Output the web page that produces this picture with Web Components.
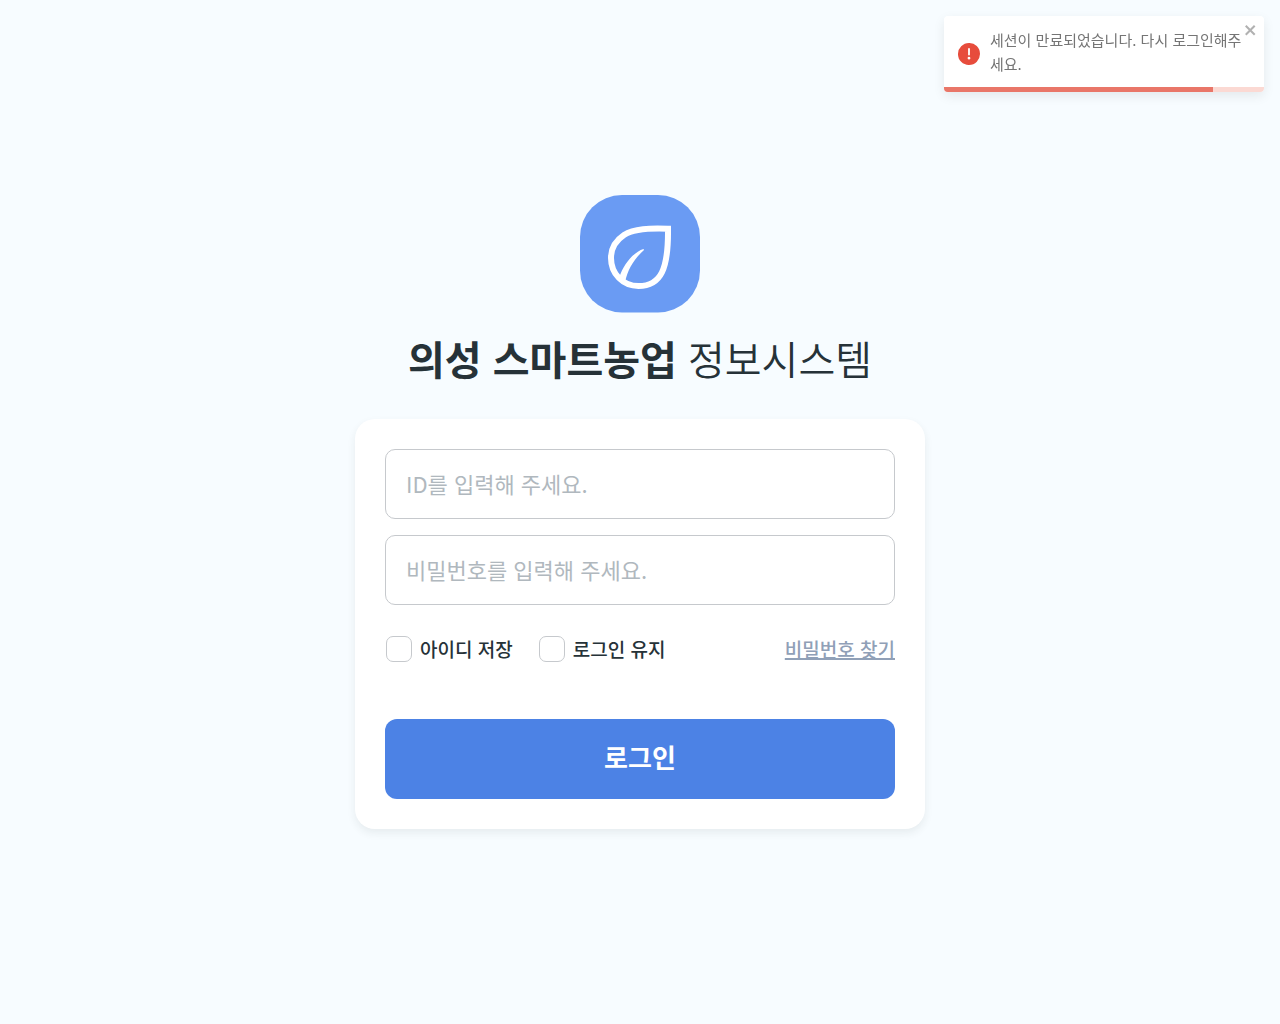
<!DOCTYPE html>
<html lang="ko">
<head>
<meta charset="utf-8">
<meta name="viewport" content="width=device-width, initial-scale=1">
<title>의성 스마트농업 정보시스템</title>
<style>
  body {
    margin: 0;
    background: #f7fcff;
    color: #263238;
    font-family: "Noto Sans CJK KR", sans-serif;
  }
</style>
</head>
<body>
<login-page>
  <toast-message slot="toast" value="84">세션이 만료되었습니다. 다시 로그인해주세요.</toast-message>
  <brand-logo></brand-logo>
  <page-title><strong>의성 스마트농업</strong> 정보시스템</page-title>
  <login-form></login-form>
</login-page>

<template id="login-page">
  <style>
    :host {
      display: block;
    }
    main {
      display: flex;
      flex-direction: column;
      align-items: center;
      justify-content: center;
      min-height: 100vh;
    }
    .toasts {
      position: fixed;
      top: 16px;
      right: 16px;
      width: 320px;
    }
  </style>
  <main><slot></slot></main>
  <div class="toasts"><slot name="toast"></slot></div>
</template>

<template id="brand-logo">
  <style>
    :host {
      display: block;
    }
    svg {
      display: block;
    }
  </style>
  <svg width="120" height="118" viewBox="0 0 120 118" fill="none" aria-hidden="true">
    <rect width="120" height="117.500" rx="42" fill="#6a9bf3"/>
    <path d="M88 33.700C70 33 54 33.500 44 40C35 46 31 54 31 63C31 79 43 91 58.500 91C81 91 88.500 74 88 33.700Z" stroke="#fff" stroke-width="6"/>
    <path d="M63.500 54C54 57 44 68 39 83L45 87C48 74 54 64 64 55Z" fill="#fff"/>
  </svg>
</template>

<template id="page-title">
  <style>
    :host {
      display: block;
      margin: 15px 0 31px;
    }
    h1 {
      margin: 0;
      font-size: 40px;
      font-weight: 350;
      line-height: 60px;
    }
    ::slotted(strong) {
      font-weight: 700;
    }
  </style>
  <h1><slot></slot></h1>
</template>

<template id="login-form">
  <style>
    :host {
      display: block;
      box-sizing: border-box;
      width: 100%;
      max-width: 570px;
      padding: 30px;
      border-radius: 20px;
      background: #fff;
      box-shadow: 0 4px 8px rgba(38, 50, 56, 0.08);
    }
    form {
      display: flex;
      flex-direction: column;
      gap: 16px;
    }
    .options {
      display: flex;
      align-items: center;
      gap: 25px;
      margin: 14px 0 40px;
    }
    a {
      margin-left: auto;
      color: #90a0b7;
      font-size: 19px;
      font-weight: 500;
      line-height: 28px;
      text-decoration-thickness: 2px;
      text-underline-offset: 1px;
    }
    button {
      height: 80px;
      padding: 0 0 5px;
      border: 0;
      border-radius: 12px;
      background: #4c82e5;
      color: #fff;
      font: inherit;
      font-size: 26px;
      font-weight: 700;
    }
  </style>
  <form>
    <text-field placeholder="ID를 입력해 주세요."></text-field>
    <text-field type="password" placeholder="비밀번호를 입력해 주세요."></text-field>
    <div class="options">
      <check-box>아이디 저장</check-box>
      <check-box>로그인 유지</check-box>
      <a href="#">비밀번호 찾기</a>
    </div>
    <button type="button">로그인</button>
  </form>
</template>

<template id="text-field">
  <style>
    :host {
      display: block;
    }
    input {
      display: block;
      box-sizing: border-box;
      width: 100%;
      height: 70px;
      padding: 0 20px 2px;
      border: 1px solid #c6c9cd;
      border-radius: 10px;
      background: #fff;
      color: inherit;
      font: inherit;
      font-size: 22px;
    }
    input::placeholder {
      color: #b0b8be;
      opacity: 1;
    }
  </style>
  <input>
</template>

<template id="check-box">
  <style>
    :host {
      display: block;
    }
    label {
      display: flex;
      align-items: center;
      gap: 8px;
      font-size: 19px;
      font-weight: 500;
      line-height: 28px;
    }
    input {
      appearance: none;
      width: 26px;
      height: 26px;
      margin: 1px 0 1px 1px;
      border: 1px solid #c6c9cd;
      border-radius: 7px;
      background: #fff;
    }
    input:checked {
      border-color: #4c82e5;
      background: #4c82e5;
    }
  </style>
  <label><input type="checkbox"><span><slot></slot></span></label>
</template>

<template id="toast-message">
  <style>
    :host {
      display: block;
      border-radius: 4px;
      overflow: hidden;
      background: #fff;
      box-shadow: 0 4px 12px rgba(0, 0, 0, 0.08);
      color: #757575;
    }
    .body {
      display: flex;
      align-items: center;
      gap: 10px;
      padding: 14px 14px 9px;
    }
    .icon {
      flex: none;
    }
    .text {
      flex: 1;
      font-size: 15px;
      line-height: 24px;
      margin: -2px 0 2px;
    }
    button {
      position: absolute;
      top: 6px;
      right: 6px;
      padding: 0;
      border: 0;
      background: none;
      color: #000;
      opacity: 0.3;
    }
    button svg {
      display: block;
    }
    .track {
      height: 5px;
      background: #fbd9d3;
    }
    .bar {
      height: 100%;
      background: #e97668;
    }
  </style>
  <div role="alert">
    <div class="body">
      <svg class="icon" width="22" height="22" viewBox="0 0 24 24" fill="#e74c3c" aria-hidden="true">
        <path d="M11.983 0a12.206 12.206 0 00-8.51 3.653A11.8 11.8 0 000 12.207 11.779 11.779 0 0011.800 24h.214A12.111 12.111 0 0024 11.791 11.766 11.766 0 0011.983 0zM10.500 16.542a1.476 1.476 0 011.449-1.530h.027a1.527 1.527 0 011.523 1.470 1.475 1.475 0 01-1.449 1.530h-.027a1.529 1.529 0 01-1.523-1.470zM11 12.500v-6a1 1 0 012 0v6a1 1 0 11-2 0z"/>
      </svg>
      <div class="text"><slot></slot></div>
    </div>
    <div class="track"><div class="bar"></div></div>
  </div>
  <button type="button" aria-label="닫기">
    <svg width="14" height="16" viewBox="0 0 14 16" fill="currentColor" aria-hidden="true">
      <path fill-rule="evenodd" d="M7.710 8.230l3.750 3.750-1.480 1.480-3.750-3.750-3.750 3.750L1 11.980l3.750-3.750L1 4.480 2.480 3l3.750 3.750L9.980 3l1.480 1.480-3.750 3.750z"/>
    </svg>
  </button>
</template>

<script>
class BaseElement extends HTMLElement {
  constructor() {
    super();
    const template = document.getElementById(this.localName);
    this.attachShadow({mode: 'open'}).append(template.content.cloneNode(true));
  }
}

customElements.define('login-page', class extends BaseElement {});
customElements.define('brand-logo', class extends BaseElement {});
customElements.define('page-title', class extends BaseElement {});
customElements.define('check-box', class extends BaseElement {});

customElements.define('text-field', class extends BaseElement {
  connectedCallback() {
    const input = this.shadowRoot.querySelector('input');
    input.type = this.getAttribute('type') || 'text';
    input.placeholder = this.getAttribute('placeholder');
    input.setAttribute('aria-label', input.placeholder);
  }
});

customElements.define('login-form', class extends BaseElement {});

customElements.define('toast-message', class extends BaseElement {
  connectedCallback() {
    // remaining time, in percent
    this.shadowRoot.querySelector('.bar').style.width = this.getAttribute('value') + '%';
    this.shadowRoot.querySelector('button').onclick = () => this.remove();
  }
});
</script>
</body>
</html>
